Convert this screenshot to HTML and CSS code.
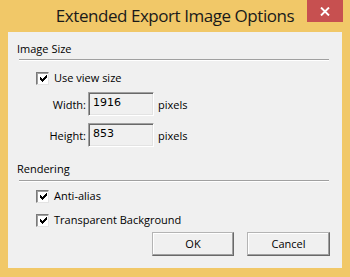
FILE: index.html
```html
<!DOCTYPE html>
<html>
<head>
<meta charset="utf-8">
<link rel="stylesheet" href="styles.css">
</head>
<body>
<div class="window">
  <div class="titlebar">
    <span class="title">Extended Export Image Options</span>
    <span class="close"><svg width="10" height="9" viewBox="0 0 10 9"><path d="M1 0.5 L9 8.5 M9 0.5 L1 8.5" stroke="#fff" stroke-width="1.9" fill="none"/></svg></span>
  </div>
  <div class="client">
    <div class="group-title">Image Size</div>
    <div class="sep"></div>
    <div class="check first"><span class="box"><svg width="7" height="7" viewBox="0 0 7 7"><path d="M6 0h1v1h-1z M5 1h2v1h-2z M0 2h1v1h-1z M4 2h3v1h-3z M0 3h2v1h-2z M3 3h3v1h-3z M0 4h5v1h-5z M1 5h3v1h-3z M2 6h1v1h-1z" fill="#000"/></svg></span><span>Use view size</span></div>
    <div class="field first-field"><span class="flabel">Width:</span><span class="input">1916</span><span class="unit">pixels</span></div>
    <div class="field"><span class="flabel">Height:</span><span class="input">853</span><span class="unit">pixels</span></div>
    <div class="group-title second">Rendering</div>
    <div class="sep sep2"></div>
    <div class="check second-first"><span class="box"><svg width="7" height="7" viewBox="0 0 7 7"><path d="M6 0h1v1h-1z M5 1h2v1h-2z M0 2h1v1h-1z M4 2h3v1h-3z M0 3h2v1h-2z M3 3h3v1h-3z M0 4h5v1h-5z M1 5h3v1h-3z M2 6h1v1h-1z" fill="#000"/></svg></span><span>Anti-alias</span></div>
    <div class="check next"><span class="box"><svg width="7" height="7" viewBox="0 0 7 7"><path d="M6 0h1v1h-1z M5 1h2v1h-2z M0 2h1v1h-1z M4 2h3v1h-3z M0 3h2v1h-2z M3 3h3v1h-3z M0 4h5v1h-5z M1 5h3v1h-3z M2 6h1v1h-1z" fill="#000"/></svg></span><span>Transparent Background</span></div>
    <div class="buttons"><span class="btn ok">OK</span><span class="btn cancel">Cancel</span></div>
  </div>
</div>
</body>
</html>
```
FILE: styles.css
```css
html, body { margin: 0; padding: 0; }
body { width: 350px; height: 277px; overflow: hidden; background: #f1c868; }
.window { width: 350px; height: 277px; display: flex; flex-direction: column; font-family: "Open Sans", sans-serif; color: #000; }
.titlebar { height: 32px; position: relative; display: flex; justify-content: center; }
.title { font-size: 17px; line-height: 24px; padding-top: 4px; color: #1a1a1a; letter-spacing: -0.45px; }
.close { position: absolute; top: 0; left: 307px; width: 36px; height: 22px; background: #c75050; display: flex; align-items: center; justify-content: center; }
.close svg { display: block; margin-top: 1px; }
.client { margin: 0 8px; height: 236px; background: #f0f0f0; box-sizing: border-box; display: flex; flex-direction: column; font-size: 11px; }
.group-title { padding-left: 9px; padding-top: 9px; line-height: 16px; height: 16px; }
.group-title.second { padding-top: 14px; }
.sep { margin: 2px 13px 0 11px; height: 0; border-top: 1px solid #a0a0a0; border-bottom: 1px solid #fff; }
.sep2 { margin-top: 3px; }
.check { display: flex; align-items: center; height: 16px; padding-left: 28px; line-height: 16px; }
.check.first { margin-top: 9px; }
.check.second-first { margin-top: 6px; }
.check.next { margin-top: 8px; }
.box { width: 13px; height: 13px; box-sizing: border-box; background: #fff; border: 1px solid; border-color: #7a7a7a #e3e3e3 #e3e3e3 #7a7a7a; box-shadow: inset 1px 1px #a0a0a0; display: flex; align-items: center; justify-content: center; margin-right: 5px; }
.box svg { display: block; margin: 1px 0 0 1px; }
.field { display: flex; align-items: center; height: 24px; margin-top: 7px; }
.field.first-field { margin-top: 6px; }
.flabel { width: 78px; text-align: right; }
.input { margin-left: 2px; width: 66px; height: 24px; box-sizing: border-box; border: 1px solid; border-color: #a0a0a0 #fff #fff #a0a0a0; box-shadow: inset 1px 1px #696969, inset -1px -1px #e3e3e3; font-family: "DejaVu Sans", sans-serif; font-size: 11px; line-height: 13px; padding: 3px 0 0 4px; align-self: stretch; }
.unit { margin-left: 4px; }
.buttons { display: flex; justify-content: flex-end; gap: 13px; margin-top: 4px; padding-right: 12px; }
.btn { height: 24px; box-sizing: border-box; display: flex; align-items: center; justify-content: center; border: 1px solid; border-color: #b4b4b4 #696969 #696969 #b4b4b4; box-shadow: inset -1px -1px #a0a0a0, inset 1px 1px #fff; line-height: 16px; }
.ok { width: 82px; }
.cancel { width: 83px; }
```
